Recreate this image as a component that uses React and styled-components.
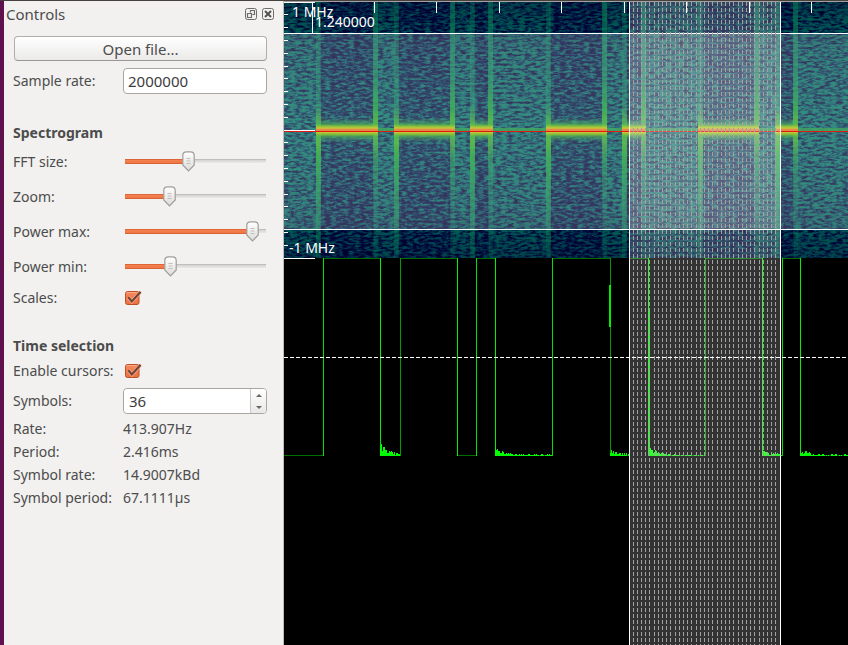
import React, { useState } from "react";
import styled, { createGlobalStyle } from "styled-components";

const svgUrl = (markup) => `url("data:image/svg+xml,${encodeURIComponent(markup)}")`;

const thumbImage = svgUrl(
  `<svg xmlns="http://www.w3.org/2000/svg" width="13" height="21" viewBox="0 0 13 21"><defs><linearGradient id="g" x1="0" y1="0" x2="0" y2="1"><stop offset="0" stop-color="#fff"/><stop offset="1" stop-color="#dcdbd9"/></linearGradient></defs><path d="M4.500.8h4q3.700 0 3.700 3.700v9.500l-5.700 6-5.700-6v-9.500q0-3.700 3.700-3.700z" fill="url(#g)" stroke="#a09d99" stroke-width="1.200"/><path d="M4.500 7.500h4M4.500 10h4M4.500 12.500h4" stroke="#c0beba"/></svg>`
);

const checkImage = svgUrl(
  `<svg xmlns="http://www.w3.org/2000/svg" width="17" height="16" viewBox="0 0 17 16"><defs><linearGradient id="g" x1="0" y1="0" x2="0" y2="1"><stop offset="0" stop-color="#f58a5e"/><stop offset="1" stop-color="#ee6f3f"/></linearGradient></defs><rect x=".5" y="1.500" width="13.500" height="13" rx="2" fill="url(#g)" stroke="#b9502a"/><path d="M1.500 3.500q0-1 1-1h9" fill="none" stroke="#f9ab8a"/><path d="M3.200 7.200l3.600 4.300L15.300 2" fill="none" stroke="#f9a786" stroke-width="3.600"/><path d="M3.200 7.200l3.600 4.300L15.600 1.700" fill="none" stroke="#6f4436" stroke-width="2.100"/></svg>`
);

const GlobalStyle = createGlobalStyle`
  * { box-sizing: border-box; }
  html, body, #root { height: 100%; }
  body {
    margin: 0;
    overflow: hidden;
    background: #000;
    color: #4c4c4c;
    font: 14px/20px "Noto Sans", "Open Sans", sans-serif;
  }
`;

const Window = styled.div`
  display: grid;
  grid-template-columns: 284px minmax(0, 1fr);
  min-height: 100vh;
  border-top: 1px solid #45413c;
`;

const Dock = styled.aside`
  background: #f2f1f0;
  border-left: 4px solid #61104e;
  border-right: 1px solid #bfbdba;
`;

const DockHeader = styled.header`
  display: flex;
  align-items: center;
  gap: 5px;
  height: 25px;
  padding: 0 9px 0 2px;
`;

const DockTitle = styled.h1`
  flex: 1;
  margin: 0;
  font-size: 15px;
  font-weight: 400;
`;

const IconButton = styled.button`
  display: flex;
  width: 12px;
  height: 12px;
  padding: 0;
  border: 0;
  background: none;
`;

const Form = styled.form`
  padding: 10px 16px 0 9px;
`;

const OpenButton = styled.button`
  display: block;
  width: calc(100% - 1px);
  height: 25px;
  margin: 0 0 7px 1px;
  padding: 0;
  border: 1px solid #b1aeaa;
  border-bottom-color: #999693;
  border-radius: 4px;
  background: linear-gradient(#ffffff, #ebeae9);
  color: inherit;
  font: inherit;
  font-size: 15px;
`;

const Row = styled.div`
  display: grid;
  grid-template-columns: 110px minmax(0, 1fr);
  align-items: center;
  height: ${(p) => p.$height}px;
`;

const SectionTitle = styled.h2`
  margin: ${(p) => p.$gap}px 0 0;
  font-size: 14px;
  line-height: 22px;
  font-weight: 700;
`;

const Field = styled.input`
  width: 100%;
  min-width: 0;
  height: 26px;
  padding: 0 4px;
  border: 1px solid #aaa7a3;
  border-radius: 4px;
  background: #fff;
  color: #3c3c3c;
  font: inherit;
  font-size: 15px;
  outline: none;
`;

const Slider = styled.input`
  appearance: none;
  width: calc(100% - 3px);
  height: 21px;
  margin: 0 1px 0 2px;
  background:
    linear-gradient(#d0572b, #f5804f 30%, #f07746 70%, #d0572b) left center / var(--fill) 5px no-repeat,
    linear-gradient(#b5b3b0, #dddcda 35%, #e8e7e5 80%, #fff) center / 100% 5px no-repeat;
  border-radius: 3px;
  outline: none;

  &::-webkit-slider-thumb {
    appearance: none;
    width: 13px;
    height: 21px;
    background: ${thumbImage};
  }
`;

const Check = styled.input`
  appearance: none;
  width: 17px;
  height: 16px;
  margin: 0 0 0 2px;

  &:checked { background: ${checkImage}; }
  &:not(:checked) { border: 1px solid #aaa7a3; border-radius: 3px; background: #fff; }
`;

const Spin = styled.div`
  display: flex;
  height: 26px;
  border: 1px solid #aaa7a3;
  border-radius: 4px;
  background: #fff;
  overflow: hidden;
`;

const SpinField = styled(Field)`
  flex: 1;
  height: 24px;
  padding: 0 5px;
  border: 0;
  appearance: textfield;

  &::-webkit-inner-spin-button { appearance: none; }
`;

const SpinButtons = styled.div`
  display: grid;
  grid-template-rows: 1fr 1fr;
  width: 16px;
  border-left: 1px solid #c9c7c4;
  background: linear-gradient(#fff, #e9e8e6);
`;

const SpinButton = styled.button`
  display: grid;
  place-items: center;
  padding: 0;
  border: 0;
  background: none;
`;

const Facts = styled.dl`
  margin: 0;
`;

const Fact = styled(Row)`
  dd { margin: 0; }
`;

const View = styled.main`
  display: flex;
  background: #000;
  border-top: 1px solid #a59f9f;
`;

const Plot = styled.svg`
  flex: 1;
  min-width: 0;
  display: block;
`;

const AxisText = styled.text`
  fill: #fff;
  font: 14px "Noto Sans", "Open Sans", sans-serif;
`;

const SliderRow = ({ id, label, initial }) => {
  const [value, setValue] = useState(initial);
  return (
    <Row $height={35}>
      <label htmlFor={id}>{label}</label>
      <Slider
        id={id}
        type="range"
        min="0"
        max="128"
        value={value}
        onChange={(e) => setValue(Number(e.target.value))}
        style={{ "--fill": `${value + 6}px` }}
      />
    </Row>
  );
};

const CheckRow = ({ id, label, checked, onChange }) => (
  <Row $height={28}>
    <label htmlFor={id}>{label}</label>
    <Check id={id} type="checkbox" checked={checked} onChange={(e) => onChange(e.target.checked)} />
  </Row>
);

/* Transmission bursts, as [start, end] offsets on the time axis. */
const bursts = [[32, 94], [110, 171], [186, 209], [262, 323], [338, 362], [414, 475], [491, 514]];
const pulses = [[39, 96], [116, 173], [192, 211], [268, 326], [345, 364], [421, 478], [498, 516]];
const decayHeights = [12, 0, 7, 5, 11, 4, 6];
const cursor = { from: 345, to: 496 };

const Noise = ({ id, green, blue }) => (
  <filter id={id} x="0" y="0" width="100%" height="100%" colorInterpolationFilters="sRGB">
    <feTurbulence type="fractalNoise" baseFrequency="0.17 0.42" numOctaves="3" seed="11" />
    <feColorMatrix values="0.7 0.3 0 0 0  0.7 0.3 0 0 0  0.7 0.3 0 0 0  0 0 0 0 1" />
    <feComponentTransfer>
      <feFuncR type="table" tableValues="0 0" />
      <feFuncG type="table" tableValues={green} />
      <feFuncB type="table" tableValues={blue} />
    </feComponentTransfer>
  </filter>
);

const SpectrumDefs = () => (
  <defs>
    <Noise id="noise" green="0 0 0 0.17 0.42 0.47 0.48 0.5" blue="0.14 0.14 0.18 0.31 0.38 0.36 0.34 0.3" />
    <Noise id="noiseDim" green="0 0 0 0.04 0.27 0.44 0.46 0.48" blue="0.12 0.12 0.18 0.25 0.35 0.38 0.37 0.35" />
    <linearGradient id="rolloff" x1="0" y1="0" x2="0" y2="1">
      <stop offset="0" stopColor="#000028" stopOpacity="0.4" />
      <stop offset="0.2" stopColor="#000028" stopOpacity="0.08" />
      <stop offset="0.5" stopColor="#008070" stopOpacity="0.1" />
      <stop offset="0.8" stopColor="#000028" stopOpacity="0.08" />
      <stop offset="1" stopColor="#000028" stopOpacity="0.4" />
    </linearGradient>
    <linearGradient id="startStreak" x1="0" y1="0" x2="0" y2="1">
      <stop offset="0" stopColor="#067858" stopOpacity="0.35" />
      <stop offset="0.4" stopColor="#068858" stopOpacity="0.5" />
      <stop offset="0.5" stopColor="#50b810" stopOpacity="0.95" />
      <stop offset="0.6" stopColor="#12a02c" stopOpacity="0.9" />
      <stop offset="0.72" stopColor="#0c9444" stopOpacity="0.75" />
      <stop offset="1" stopColor="#067858" stopOpacity="0.3" />
    </linearGradient>
    <linearGradient id="endStreak" x1="0" y1="0" x2="0" y2="1">
      <stop offset="0" stopColor="#067858" stopOpacity="0.6" />
      <stop offset="0.3" stopColor="#0a8850" stopOpacity="0.7" />
      <stop offset="0.42" stopColor="#12a02c" stopOpacity="0.85" />
      <stop offset="0.5" stopColor="#50b810" stopOpacity="0.95" />
      <stop offset="0.62" stopColor="#0c9444" stopOpacity="0.6" />
      <stop offset="0.8" stopColor="#067858" stopOpacity="0.35" />
      <stop offset="1" stopColor="#067858" stopOpacity="0.15" />
    </linearGradient>
    <linearGradient id="carrier" x1="0" y1="0" x2="0" y2="1">
      <stop offset="0" stopColor="#1c9048" stopOpacity="0" />
      <stop offset="0.24" stopColor="#1c9c38" stopOpacity="0.65" />
      <stop offset="0.34" stopColor="#6cb808" stopOpacity="0.95" />
      <stop offset="0.42" stopColor="#b8bc08" />
      <stop offset="0.48" stopColor="#e06c18" />
      <stop offset="0.55" stopColor="#e06c18" />
      <stop offset="0.6" stopColor="#b8b408" />
      <stop offset="0.69" stopColor="#5cb008" stopOpacity="0.95" />
      <stop offset="0.8" stopColor="#1c9c38" stopOpacity="0.6" />
      <stop offset="1" stopColor="#1c9048" stopOpacity="0" />
    </linearGradient>
  </defs>
);

const Spectrogram = () => (
  <g>
    <rect width="100%" height="256" filter="url(#noise)" />
    {bursts.map(([a, b]) => (
      <rect key={a} x={a + 4} width={b - a - 8} height="256" filter="url(#noiseDim)" />
    ))}
    <rect width="100%" height="256" fill="url(#rolloff)" />
    {bursts.map(([a, b]) => (
      <g key={a}>
        <rect x={a} width="5" height="256" fill="url(#startStreak)" />
        <rect x={b - 5} width="5" height="256" fill="url(#endStreak)" />
      </g>
    ))}
    <rect x="32" y="126" width="100%" height="3" fill="#129038" opacity="0.85" />
    {bursts.map(([a, b]) => (
      <rect key={a} x={a} y="116" width={b - a} height="24" fill="url(#carrier)" />
    ))}
    <rect y="31" width="100%" height="196" fill="#fff" opacity="0.2" />
    <path d="M0 31.500H4000M0 227.500H4000" stroke="#fff" />
    <rect x="0" y="129" width="100%" height="1" fill="#e01a10" />
  </g>
);

/* Ragged decay left on the floor after a falling edge. */
const decay = (x, width, height, index) => {
  let d = `M${x} 454`;
  for (let i = 0; i < width; i += 1) {
    const jitter = ((i * i * 3 + i * 7 + index * 5) % 13) / 13;
    const h = Math.round(height * Math.exp(-i / 9) * (0.55 + jitter / 2) + jitter * 2);
    d += `V${454 - h}H${x + i + 1}`;
  }
  return `${d}V454Z`;
};

const Trace = () => (
  <g shapeRendering="crispEdges">
    <path d="M0 453.500H39" stroke="#006e00" />
    {pulses.map(([a, b], i) => {
      const next = pulses[i + 1] ? pulses[i + 1][0] : 4000;
      return (
        <g key={a}>
          <path d={`M${a} 256.500H${b}M${b} 453.500H${next}`} stroke="#006e00" />
          <path d={`M${a + 0.5} 256V454`} stroke={i === 1 || i === 5 ? "#009c00" : "#00e000"} />
          <path d={`M${b + 0.5} 256V454`} stroke={i === 3 ? "#009800" : "#00f000"} />
          {decayHeights[i] > 0 && (
            <path d={decay(b, Math.min(next - b, 57), decayHeights[i], i)} fill="#00ff00" />
          )}
        </g>
      );
    })}
    <path d="M325 283h2v42h-2zM364 308h2v146h-2z" fill="#00f000" />
  </g>
);

const Cursors = ({ symbols }) => {
  const step = (cursor.to - cursor.from) / symbols;
  return (
    <g shapeRendering="crispEdges">
      <rect x={cursor.from} width={cursor.to - cursor.from} height="100%" fill="#fff" opacity="0.2" />
      {Array.from({ length: Math.max(0, symbols - 1) }, (_, i) => {
        const x = Math.floor(cursor.from + step * (i + 1)) + 0.5;
        return <line key={i} x1={x} x2={x} y1="0" y2="100%" stroke="#a3a3a3" strokeDasharray="4 2" />;
      })}
      <line x1="345.500" x2="345.500" y1="0" y2="100%" stroke="#fff" />
      <line x1="496.500" x2="496.500" y1="0" y2="100%" stroke="#fff" />
    </g>
  );
};

const Scales = () => (
  <g>
    <g stroke="#fff" shapeRendering="crispEdges">
      <path d="M0 .5H31M0 128.500H31M0 256.500H31M28.500 0V31" />
      {Array.from({ length: 19 }, (_, i) => {
        const y = Math.floor((i + 1) * 12.8) + 0.5;
        return i === 9 ? null : <path key={i} d={`M0 ${y}H4`} />;
      })}
      {Array.from({ length: 40 }, (_, i) => {
        const x = Math.floor(27.5 + (i + 1) * 62.5) + 0.5;
        return <path key={i} d={`M${x} 0V11`} />;
      })}
    </g>
    <AxisText x="8" y="15">1 MHz</AxisText>
    <AxisText x="31" y="25">1.240000</AxisText>
    <AxisText x="5" y="251">-1 MHz</AxisText>
  </g>
);

export default function App() {
  const [rate, setRate] = useState("2000000");
  const [symbols, setSymbols] = useState(36);
  const [scales, setScales] = useState(true);
  const [cursors, setCursors] = useState(true);
  const updateSymbols = (n) => setSymbols(Math.max(1, n || 1));

  return (
    <>
      <GlobalStyle />
      <Window>
        <Dock>
          <DockHeader>
            <DockTitle>Controls</DockTitle>
            <IconButton type="button" aria-label="Float panel">
              <svg width="12" height="12" fill="none" stroke="#6e6c69">
                <rect x=".5" y=".5" width="11" height="11" rx="2" />
                <path d="M5.500 4.500V2.500H9.500V6.500H7.500M2.500 5.500H6.500V9.500H2.500Z" strokeWidth="1.200" />
              </svg>
            </IconButton>
            <IconButton type="button" aria-label="Close panel">
              <svg width="12" height="12" fill="none" stroke="#6e6c69">
                <rect x=".5" y=".5" width="11" height="11" rx="2" />
                <path d="M3 3L9 9M9 3L3 9" stroke="#55534f" strokeWidth="2" />
              </svg>
            </IconButton>
          </DockHeader>
          <Form onSubmit={(e) => e.preventDefault()}>
            <OpenButton type="button">Open file...</OpenButton>
            <Row $height={26}>
              <label htmlFor="rate">Sample rate:</label>
              <Field id="rate" type="text" value={rate} onChange={(e) => setRate(e.target.value)} />
            </Row>

            <SectionTitle $gap={28}>Spectrogram</SectionTitle>
            <SliderRow id="fft" label="FFT size:" initial={57} />
            <SliderRow id="zoom" label="Zoom:" initial={38} />
            <SliderRow id="pmax" label="Power max:" initial={121} />
            <SliderRow id="pmin" label="Power min:" initial={39} />
            <CheckRow id="scales" label="Scales:" checked={scales} onChange={setScales} />

            <SectionTitle $gap={23}>Time selection</SectionTitle>
            <CheckRow id="cursors" label="Enable cursors:" checked={cursors} onChange={setCursors} />
            <Row $height={32}>
              <label htmlFor="symbols">Symbols:</label>
              <Spin>
                <SpinField
                  id="symbols"
                  type="number"
                  value={symbols}
                  onChange={(e) => updateSymbols(Number(e.target.value))}
                />
                <SpinButtons>
                  <SpinButton type="button" aria-label="Increase symbols" onClick={() => updateSymbols(symbols + 1)}>
                    <svg width="6" height="3"><path d="M0 3L3 0L6 3Z" fill="#666" /></svg>
                  </SpinButton>
                  <SpinButton type="button" aria-label="Decrease symbols" onClick={() => updateSymbols(symbols - 1)}>
                    <svg width="6" height="3"><path d="M0 0L3 3L6 0Z" fill="#666" /></svg>
                  </SpinButton>
                </SpinButtons>
              </Spin>
            </Row>
            <Facts>
              <Fact $height={23}><dt>Rate:</dt><dd>413.907Hz</dd></Fact>
              <Fact $height={23}><dt>Period:</dt><dd>2.416ms</dd></Fact>
              <Fact $height={23}><dt>Symbol rate:</dt><dd>14.9007kBd</dd></Fact>
              <Fact $height={23}><dt>Symbol period:</dt><dd>67.1111µs</dd></Fact>
            </Facts>
          </Form>
        </Dock>
        <View>
          <Plot role="img" aria-label="Spectrogram and amplitude trace">
            <SpectrumDefs />
            <Spectrogram />
            <Trace />
            {cursors && <Cursors symbols={symbols} />}
            <line x1="0" x2="100%" y1="355.500" y2="355.500" stroke="#fff" strokeDasharray="4 2" />
            {scales && <Scales />}
          </Plot>
        </View>
      </Window>
    </>
  );
}
